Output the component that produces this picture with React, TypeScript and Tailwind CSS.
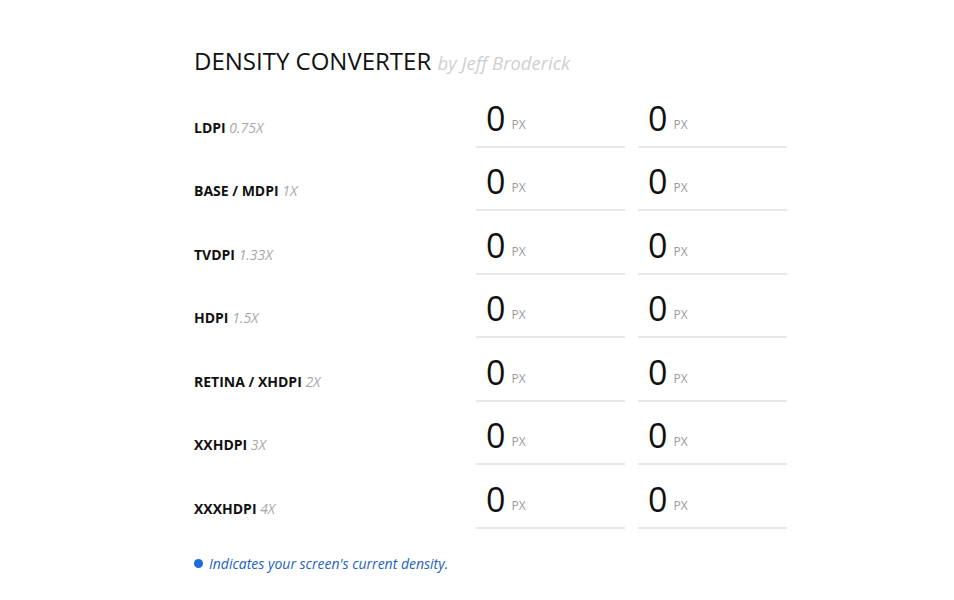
import React from "react";

const densities = [
  { name: "LDPI", scale: "0.75X" },
  { name: "BASE / MDPI", scale: "1X" },
  { name: "TVDPI", scale: "1.33X" },
  { name: "HDPI", scale: "1.5X" },
  { name: "RETINA / XHDPI", scale: "2X" },
  { name: "XXHDPI", scale: "3X" },
  { name: "XXXHDPI", scale: "4X" }
];

const PxField = () => (
  <div className="w-[149px] border-b-2 border-[#e8e8e8] pl-[10px] pb-[10px] flex items-baseline">
    <span className="text-[34px] leading-none text-[#111]">0</span>
    <span className="ml-[6px] relative -top-[2px] text-[12px] text-[#9a9a9a]">PX</span>
  </div>
);

export default function App() {
  return (
    <div
      className="min-h-[600px] bg-white pl-[194px] pt-[45px]"
      style={{ fontFamily: '"Open Sans", sans-serif' }}
    >
      <h1 className="text-[24px] leading-[32px] text-[#111]">
        DENSITY CONVERTER{" "}
        <span className="italic text-[18.5px] text-[#d0d0d0]">by Jeff Broderick</span>
      </h1>
      <div className="mt-[5px]">
        {densities.map((d) => (
          <div key={d.name} className="flex items-end h-[63.5px]">
            <div className="w-[282px] pb-[10px] text-[14px] text-[#111]">
              <span className="font-bold">{d.name}</span>{" "}
              <span className="italic text-[#a8a8a8]">{d.scale}</span>
            </div>
            <div className="flex gap-[13px]">
              <PxField />
              <PxField />
            </div>
          </div>
        ))}
      </div>
      <div className="mt-[24px] flex items-center text-[14px] italic text-[#1e62c0]">
        <span className="w-[9px] h-[9px] rounded-full bg-[#1a6ee0] mr-[6px]" />
        Indicates your screen's current density.
      </div>
    </div>
  );
}
